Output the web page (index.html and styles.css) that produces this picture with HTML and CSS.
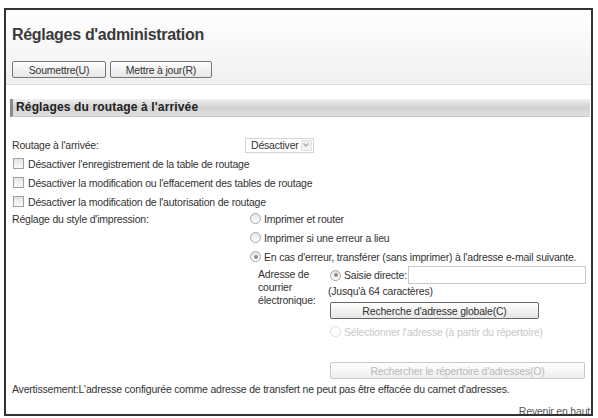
FILE: index.html
```html
<!DOCTYPE html>
<html lang="fr">
<head>
<meta charset="utf-8">
<title>Réglages d'administration</title>
<link rel="stylesheet" href="styles.css">
</head>
<body>
<div class="frame">
  <div class="header">
    <h1 class="title">Réglages d'administration</h1>
    <div class="btns">
      <button class="btn btn-submit">Soumettre(U)</button>
      <button class="btn btn-update">Mettre à jour(R)</button>
    </div>
  </div>
  <div class="section">Réglages du routage à l'arrivée</div>
  <div class="content">
    <div class="row row-select">
      <span class="label">Routage à l'arrivée:</span>
      <span class="select">Désactiver<span class="arrow"><svg width="8" height="6" viewBox="0 0 8 6"><path d="M1.5 1.5 L4 4 L6.5 1.5" fill="none" stroke="#a8a8a8" stroke-width="1.4"/></svg></span></span>
    </div>
    <label class="row check"><span class="cb"></span>Désactiver l'enregistrement de la table de routage</label>
    <label class="row check"><span class="cb"></span>Désactiver la modification ou l'effacement des tables de routage</label>
    <label class="row check"><span class="cb"></span>Désactiver la modification de l'autorisation de routage</label>
    <div class="row row-style">
      <span class="label">Réglage du style d'impression:</span>
      <div class="opts">
        <label class="opt"><span class="rb"></span>Imprimer et router</label>
        <label class="opt"><span class="rb"></span>Imprimer si une erreur a lieu</label>
        <label class="opt"><span class="rb on"></span>En cas d'erreur, transférer (sans imprimer) à l'adresse e-mail suivante.</label>
        <div class="addr">
          <div class="addr-label">Adresse de courrier électronique:</div>
          <div class="addr-body">
            <div class="direct"><label class="opt-in"><span class="rb on"></span>Saisie directe:</label><span class="input"></span></div>
            <div class="hint">(Jusqu'à 64 caractères)</div>
            <button class="btn btn-global">Recherche d'adresse globale(C)</button>
            <label class="opt-in disabled"><span class="rb dis"></span>Sélectionner l'adresse (à partir du répertoire)</label>
            <button class="btn btn-dir" disabled>Rechercher le répertoire d'adresses(O)</button>
          </div>
        </div>
      </div>
    </div>
    <div class="warn">Avertissement:L'adresse configurée comme adresse de transfert ne peut pas être effacée du carnet d'adresses.</div>
    <div class="back"><a href="#">Revenir en haut</a></div>
  </div>
</div>
</body>
</html>
```
FILE: styles.css
```css
* { box-sizing: border-box; }
html, body { margin: 0; padding: 0; background: #fff; }
body {
  font-family: "Liberation Sans", Arial, sans-serif;
  font-size: 10.5px;
  letter-spacing: -0.2px;
  color: #333;
}
.frame {
  margin: 8px 0 0 4px;
  width: 589px;
  height: 408px;
  border: 2px solid #333;
  overflow: hidden;
  display: flex;
  flex-direction: column;
}
.frame > * { flex: none; }
.header {
  height: 75px;
  background: linear-gradient(#ffffff, #f0f0f0);
  border-bottom: 1px solid #dcdcdc;
  padding: 15px 0 0 6px;
}
.title {
  margin: 0;
  font-size: 16px;
  letter-spacing: -0.3px;
  line-height: 20px;
  font-weight: bold;
  color: #3a3a3a;
}
.btns { display: flex; gap: 4px; margin-top: 16px; }
.btn {
  font-family: inherit;
  font-size: 10.5px;
  letter-spacing: -0.2px;
  color: #333;
  height: 17px;
  padding: 0;
  border: 1px solid #777;
  border-radius: 2px;
  background: linear-gradient(#ffffff, #e6e6e6);
  line-height: 14px;
}
.btn-submit { width: 94px; }
.btn-update { width: 102px; }
.section {
  margin: 14px 1px 0 4px;
  height: 18px;
  border-left: 3px solid #8a8a8a;
  border-bottom: 1px solid #c8c8c8;
  background: linear-gradient(#f0f0f0, #d2d2d2 50%, #e0e0e0);
  font-weight: bold;
  font-size: 12px;
  letter-spacing: 0.15px;
  line-height: 17px;
  padding-left: 3px;
  color: #222;
}
.content { padding: 19px 0 0 6px; display: flex; flex-direction: column; }
.row { display: flex; align-items: flex-start; }
.label { width: 235px; flex: none; }
.row-select { align-items: center; height: 18px; }
.row-select .label { width: 233px; }
.select {
  display: inline-flex;
  align-items: center;
  height: 15px;
  border: 1px solid #d4d4d4;
  padding-left: 5px;
  color: #333;
}
.arrow {
  display: inline-flex; align-items: center; justify-content: center;
  width: 11px; height: 11px; margin: 0 1px 0 2px;
  background: #f2f2f2; border: 1px solid #e2e2e2;
}
.check { height: 19px; align-items: center; padding-left: 1px; }
.cb {
  width: 11px; height: 11px; flex: none;
  border: 1px solid #a0a0a0;
  background: linear-gradient(#e4e4e4, #fafafa);
  margin-right: 4px;
}
.rb {
  width: 11px; height: 11px; flex: none;
  border: 1px solid #a4a4a4;
  border-radius: 50%;
  background: linear-gradient(#e6e6e6, #ffffff);
  margin-right: 3px;
  position: relative;
}
.rb.on::after {
  content: "";
  position: absolute;
  left: 2.5px; top: 2.5px;
  width: 4px; height: 4px;
  border-radius: 50%;
  background: #8a8a8a;
}
.rb.dis { border-color: #dcdcdc; background: #fff; }
.row-style .label { line-height: 16px; }
.opts { display: flex; flex-direction: column; margin-left: 3px; margin-top: -2px; white-space: nowrap; }
.opt { display: flex; align-items: center; height: 19px; }
.addr { display: flex; margin-left: 8px; }
.addr-label { width: 70px; line-height: 13px; padding-top: 2px; white-space: normal; }
.addr-body { display: flex; flex-direction: column; align-items: flex-start; }
.direct { display: flex; align-items: center; height: 18px; }
.opt-in { display: flex; align-items: center; margin-left: 2px; }
.input { width: 178px; height: 18px; border: 1px solid #c8c8c8; margin-left: 1px; background: #fff; }
.hint { margin-top: 1px; line-height: 13px; }
.btn-global { width: 209px; margin-left: 2px; margin-top: 4px; border-color: #666; }
.disabled { color: #c8c8c8; height: 19px; margin-top: 3px; }
.btn-dir {
  width: 255px; margin-left: 2px; margin-top: 21px;
  color: #b8b8b8; border-color: #c8c8c8;
  background: linear-gradient(#ffffff, #eeeeee);
}
.warn { margin-top: 4px; line-height: 13px; }
.back { text-align: right; padding-right: 1px; margin-top: 9px; line-height: 13px; }
.back a { color: #555; text-decoration: underline; }
```
